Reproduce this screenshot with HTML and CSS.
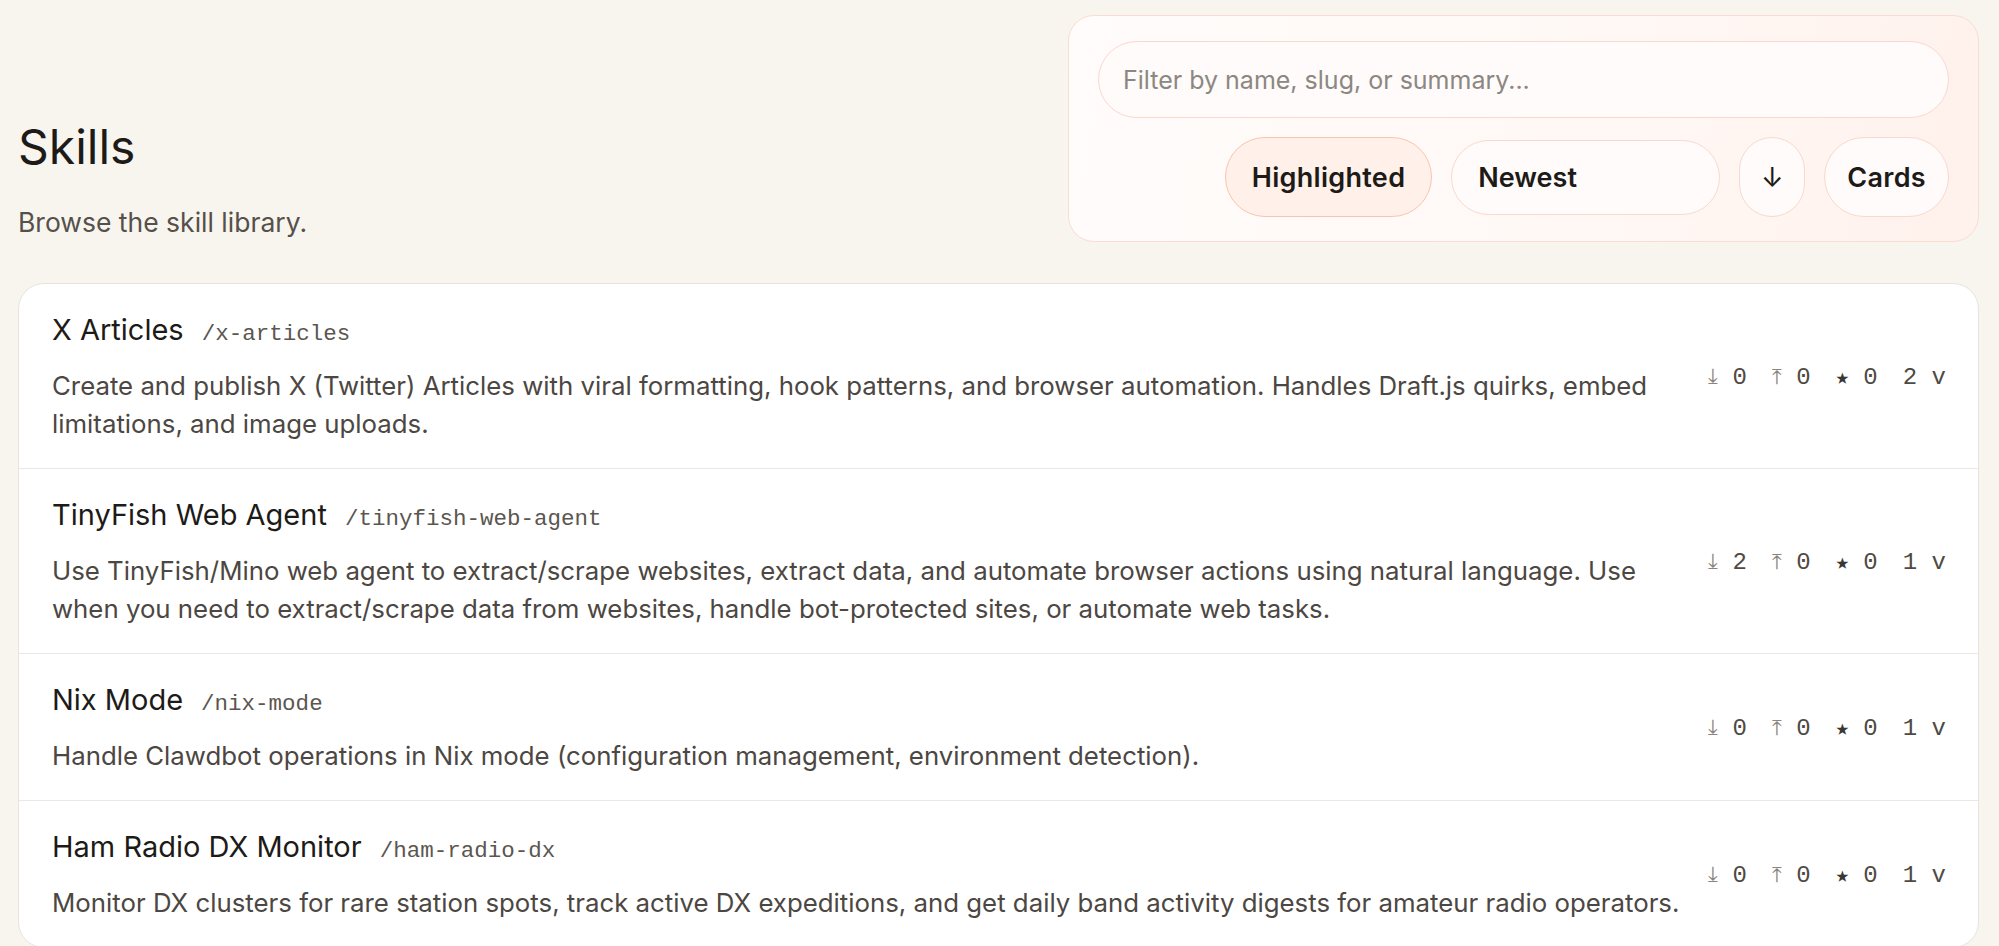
FILE: index.html
```html
<!DOCTYPE html>
<html lang="en">
<head>
<meta charset="utf-8">
<title>Skills</title>
<link rel="stylesheet" href="styles.css">
</head>
<body>
<main class="page">
  <header class="header">
    <div class="intro">
      <h1 class="title">Skills</h1>
      <p class="subtitle">Browse the skill library.</p>
    </div>
    <div class="panel">
      <input class="search" type="text" placeholder="Filter by name, slug, or summary...">
      <div class="controls">
        <button class="pill pill-active">Highlighted</button>
        <div class="pill select">Newest</div>
        <button class="pill arrow">↓</button>
        <button class="pill cards">Cards</button>
      </div>
    </div>
  </header>

  <section class="list">
    <article class="row">
      <div class="info">
        <div class="name-line"><span class="name">X Articles</span><span class="slug">/x-articles</span></div>
        <p class="desc">Create and publish X (Twitter) Articles with viral formatting, hook patterns, and browser automation. Handles Draft.js quirks, embed limitations, and image uploads.</p>
      </div>
      <div class="stats"><span class="stat"><span class="ic">⤓</span> 0</span><span class="stat"><span class="ic">⤒</span> 0</span><span class="stat"><span class="ic star">★</span> 0</span><span class="stat">2 v</span></div>
    </article>
    <article class="row">
      <div class="info">
        <div class="name-line"><span class="name">TinyFish Web Agent</span><span class="slug">/tinyfish-web-agent</span></div>
        <p class="desc">Use TinyFish/Mino web agent to extract/scrape websites, extract data, and automate browser actions using natural language. Use when you need to extract/scrape data from websites, handle bot-protected sites, or automate web tasks.</p>
      </div>
      <div class="stats"><span class="stat"><span class="ic">⤓</span> 2</span><span class="stat"><span class="ic">⤒</span> 0</span><span class="stat"><span class="ic star">★</span> 0</span><span class="stat">1 v</span></div>
    </article>
    <article class="row">
      <div class="info">
        <div class="name-line"><span class="name">Nix Mode</span><span class="slug">/nix-mode</span></div>
        <p class="desc">Handle Clawdbot operations in Nix mode (configuration management, environment detection).</p>
      </div>
      <div class="stats"><span class="stat"><span class="ic">⤓</span> 0</span><span class="stat"><span class="ic">⤒</span> 0</span><span class="stat"><span class="ic star">★</span> 0</span><span class="stat">1 v</span></div>
    </article>
    <article class="row">
      <div class="info">
        <div class="name-line"><span class="name">Ham Radio DX Monitor</span><span class="slug">/ham-radio-dx</span></div>
        <p class="desc">Monitor DX clusters for rare station spots, track active DX expeditions, and get daily band activity digests for amateur radio operators.</p>
      </div>
      <div class="stats"><span class="stat"><span class="ic">⤓</span> 0</span><span class="stat"><span class="ic">⤒</span> 0</span><span class="stat"><span class="ic star">★</span> 0</span><span class="stat">1 v</span></div>
    </article>
  </section>
</main>
</body>
</html>
```

FILE: styles.css
```css
* { box-sizing: border-box; }

html, body {
  margin: 0;
  padding: 0;
}

body {
  background: #f8f5ef;
  font-family: Inter, "Noto Sans", sans-serif;
  color: #1d1b18;
}

.page {
  padding: 15px 20px 40px 18px;
}

.header {
  display: flex;
  justify-content: space-between;
  align-items: flex-end;
}

.title {
  margin: 0;
  font-size: 48px;
  line-height: 56px;
  font-weight: 400;
  color: #1d1b18;
}

.subtitle {
  margin: 28px 0 0 0;
  font-size: 26.5px;
  line-height: 39px;
  color: #55504a;
}

.panel {
  width: 911px;
  height: 227px;
  padding: 25px 29px 24px 29px;
  border: 1.5px solid #fbdcd2;
  border-radius: 26px;
  background: linear-gradient(100deg, #fffcfb 0%, #fff8f5 60%, #fff1ec 100%);
  display: flex;
  flex-direction: column;
  gap: 19px;
}

.search {
  width: 100%;
  height: 77px;
  border: 1.5px solid #fbd8cc;
  border-radius: 40px;
  background: #fffbfa;
  padding: 0 24px;
  font-family: Inter, "Noto Sans", sans-serif;
  font-size: 25px;
  color: #1d1b18;
  outline: none;
}

.search::placeholder {
  color: #8c8781;
}

.controls {
  display: flex;
  justify-content: flex-end;
  align-items: center;
  gap: 19px;
}

.pill {
  height: 80px;
  border: 1.5px solid #fbd8cc;
  border-radius: 40px;
  background: #fffbfa;
  padding: 0 22px;
  font-family: Inter, "Noto Sans", sans-serif;
  font-size: 27px;
  letter-spacing: 0.3px;
  font-weight: 600;
  color: #1d1b18;
  display: flex;
  align-items: center;
}

.pill-active {
  background: #fff0e9;
  border-color: #f8c4b2;
  padding: 0 26px;
}

.select {
  width: 269px;
  height: 75px;
  padding-left: 26px;
  letter-spacing: 0;
}

.arrow {
  width: 66px;
  justify-content: center;
  padding: 0;
  font-weight: 400;
}

.cards {
  padding: 0 22px;
}

.list {
  margin-top: 41px;
  background: #ffffff;
  border: 1.5px solid #e8e4dd;
  border-radius: 26px;
  overflow: hidden;
}

.row {
  display: flex;
  align-items: center;
  gap: 16px;
  padding: 28px 32px 25px 33px;
  border-top: 1.5px solid #ebe8e3;
}

.row:first-child {
  border-top: none;
}

.info {
  flex: 1;
  min-width: 0;
}

.name-line {
  display: flex;
  align-items: baseline;
  gap: 18px;
  line-height: 36px;
}

.name {
  font-size: 29px;
  color: #1d1b18;
}

.slug {
  font-family: "Liberation Mono", "DejaVu Sans Mono", monospace;
  font-size: 22.5px;
  color: #5b5650;
}

.desc {
  margin: 15px 0 0 0;
  font-size: 25.8px;
  line-height: 38px;
  color: #4c4742;
}

.stats {
  display: flex;
  gap: 25px;
  font-family: "Liberation Mono", "DejaVu Sans Mono", monospace;
  font-size: 24px;
  color: #4f4a44;
  white-space: nowrap;
}

.ic {
  color: #8a847d;
  font-size: 22px;
}

.star {
  color: #3a3632;
}
```
